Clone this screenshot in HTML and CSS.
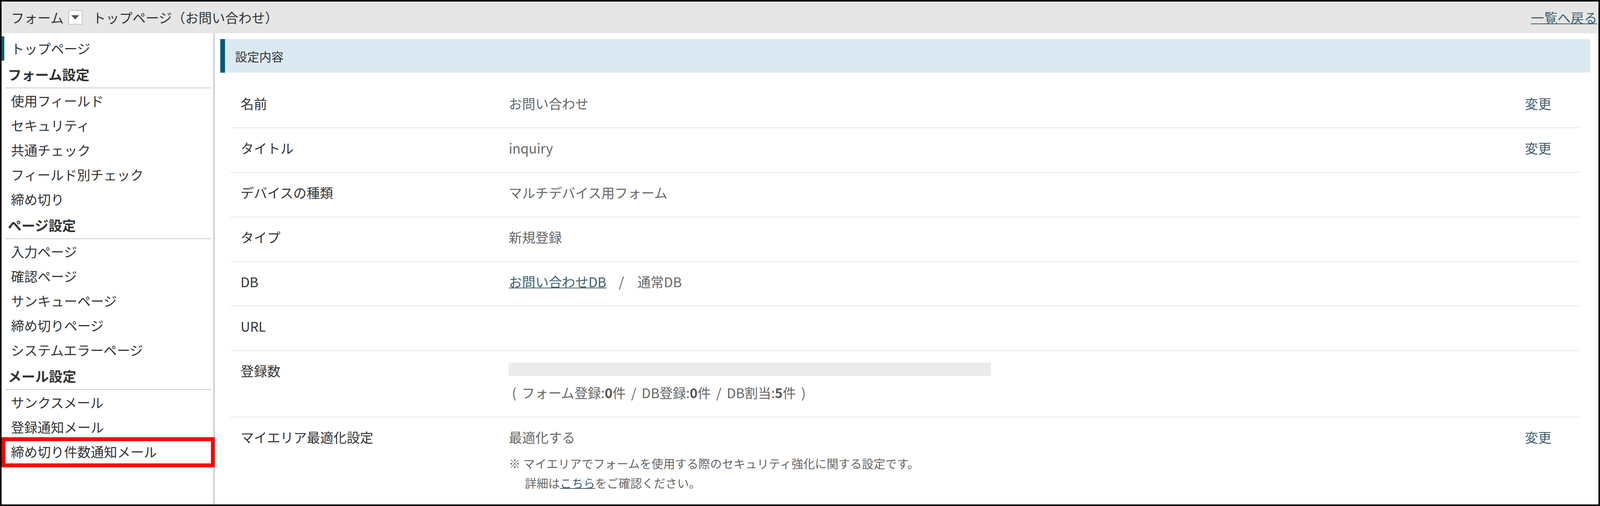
FILE: index.html
```html
<!DOCTYPE html>
<html lang="ja">
<head>
<meta charset="utf-8">
<title>フォーム トップページ</title>
<link rel="stylesheet" href="styles.css">
</head>
<body>
<div class="page">
  <header class="topbar">
    <div class="crumbs">
      <span>フォーム</span>
      <span class="dd"><svg width="21" height="11" viewBox="0 0 21 11"><polygon points="0,0 21,0 10.5,11" fill="#555"/></svg></span>
      <span>トップページ（お問い合わせ）</span>
    </div>
    <a class="back" href="#">一覧へ戻る</a>
  </header>
  <div class="layout">
    <nav class="side">
      <a class="nav-item current" href="#">トップページ</a>
      <div class="nav-group">フォーム設定</div>
      <a class="nav-item" href="#">使用フィールド</a>
      <a class="nav-item" href="#">セキュリティ</a>
      <a class="nav-item" href="#">共通チェック</a>
      <a class="nav-item" href="#">フィールド別チェック</a>
      <a class="nav-item" href="#">締め切り</a>
      <div class="nav-group">ページ設定</div>
      <a class="nav-item" href="#">入力ページ</a>
      <a class="nav-item" href="#">確認ページ</a>
      <a class="nav-item" href="#">サンキューページ</a>
      <a class="nav-item" href="#">締め切りページ</a>
      <a class="nav-item" href="#">システムエラーページ</a>
      <div class="nav-group">メール設定</div>
      <a class="nav-item" href="#">サンクスメール</a>
      <a class="nav-item" href="#">登録通知メール</a>
      <a class="nav-item marked" href="#">締め切り件数通知メール</a>
    </nav>
    <main class="main">
      <div class="section-title">設定内容</div>
      <div class="rows">
        <div class="row">
          <div class="label">名前</div>
          <div class="value">お問い合わせ</div>
          <div class="action"><a href="#">変更</a></div>
        </div>
        <div class="row">
          <div class="label">タイトル</div>
          <div class="value">inquiry</div>
          <div class="action"><a href="#">変更</a></div>
        </div>
        <div class="row">
          <div class="label">デバイスの種類</div>
          <div class="value">マルチデバイス用フォーム</div>
          <div class="action"></div>
        </div>
        <div class="row">
          <div class="label">タイプ</div>
          <div class="value">新規登録</div>
          <div class="action"></div>
        </div>
        <div class="row">
          <div class="label">DB</div>
          <div class="value"><a class="link" href="#">お問い合わせDB</a><span class="slash">/</span>通常DB</div>
          <div class="action"></div>
        </div>
        <div class="row">
          <div class="label">URL</div>
          <div class="value"></div>
          <div class="action"></div>
        </div>
        <div class="row">
          <div class="label">登録数</div>
          <div class="value">
            <div class="bar"></div>
            <div class="counts">( フォーム登録:<b>0</b>件 / DB登録:<b>0</b>件 / DB割当:<b>5</b>件 )</div>
          </div>
          <div class="action"></div>
        </div>
        <div class="row">
          <div class="label">マイエリア最適化設定</div>
          <div class="value">
            <div>最適化する</div>
            <div class="note">※ マイエリアでフォームを使用する際のセキュリティ強化に関する設定です。<br>詳細は<a class="link" href="#">こちら</a>をご確認ください。</div>
          </div>
          <div class="action"><a href="#">変更</a></div>
        </div>
      </div>
    </main>
  </div>
</div>
</body>
</html>
```

FILE: styles.css
```css
* {
  box-sizing: border-box;
}

html,
body {
  margin: 0;
  padding: 0;
  background: #fff;
}

body {
  font-family: "Noto Sans CJK JP", "Noto Sans", sans-serif;
  font-size: 34px;
  color: #333;
}

.page {
  width: 100%;
  height: 100vh;
  border: 4px solid #000;
  overflow: hidden;
  display: flex;
  flex-direction: column;
  background: #fff;
}

/* top bar */
.topbar {
  flex: none;
  height: 81px;
  background: #e6e6e6;
  display: flex;
  align-items: center;
  justify-content: space-between;
  padding: 0 3px 0 24px;
  white-space: nowrap;
}

.crumbs {
  display: flex;
  align-items: center;
}

.dd {
  width: 36px;
  height: 37px;
  border: 2px solid #c4c4c4;
  background: #fff;
  margin: 0 26px 0 12px;
  display: flex;
  align-items: center;
  justify-content: center;
}

.back {
  color: #3d5f6e;
  text-decoration: underline;
  text-decoration-thickness: 2px;
}

/* layout */
.layout {
  flex: 1;
  display: flex;
  min-height: 0;
}

/* sidebar */
.side {
  flex: none;
  width: 13.3vw;
  border-right: 2px solid #ababab;
  padding-top: 8px;
}

.nav-item {
  display: block;
  position: relative;
  height: 63px;
  line-height: 63px;
  padding-left: 24px;
  color: #333;
  text-decoration: none;
  white-space: nowrap;
}

.nav-item.current {
  height: 62px;
  line-height: 62px;
  border-left: 7px solid #0d5a78;
  padding-left: 17px;
}

.nav-item.marked::after {
  content: "";
  position: absolute;
  left: 0;
  right: -3px;
  top: -5px;
  bottom: -9px;
  border: 10px solid #ff0000;
}

.nav-group {
  margin: 0 8px 0 11px;
  padding-left: 5px;
  height: 71px;
  line-height: 69px;
  font-size: 35px;
  font-weight: bold;
  color: #333;
  border-bottom: 2px dotted #9a9a9a;
  white-space: nowrap;
}

/* main */
.main {
  flex: 1;
  min-width: 0;
  border-right: 7px solid #f5f5f5;
}

.section-title {
  margin: 15px 14px 0 15px;
  height: 86px;
  background: #dbeaf2;
  border-left: 12px solid #085878;
  padding-left: 26px;
  display: flex;
  align-items: center;
  font-size: 31px;
  color: #333;
}

.rows {
  margin: 28px 1vw 0 1vw;
}

.row {
  display: grid;
  grid-template-columns: 17.4vw 1fr auto;
  padding: 31px 0 41px;
  border-bottom: 2px solid #e8e8e8;
  line-height: 40px;
}

.label {
  padding-left: 26px;
  color: #333;
  white-space: nowrap;
}

.value {
  color: #666;
  white-space: nowrap;
}

.action {
  padding-right: 1.77vw;
}

.action a {
  color: #3d5f6e;
  text-decoration: none;
}

.link {
  color: #3d5f6e;
  text-decoration: underline;
  text-decoration-thickness: 2px;
}

.slash {
  margin: 0 34px 0 32px;
}

.bar {
  width: 30.14vw;
  height: 34px;
  margin-top: -1px;
  background: #ebebeb;
}

.counts {
  margin-top: 23px;
  padding-left: 8px;
  word-spacing: 6px;
}

.counts b {
  color: #555;
}

.note {
  margin-top: 21px;
  font-size: 30px;
  line-height: 50px;
  padding-left: 41px;
  text-indent: -41px;
}
```
